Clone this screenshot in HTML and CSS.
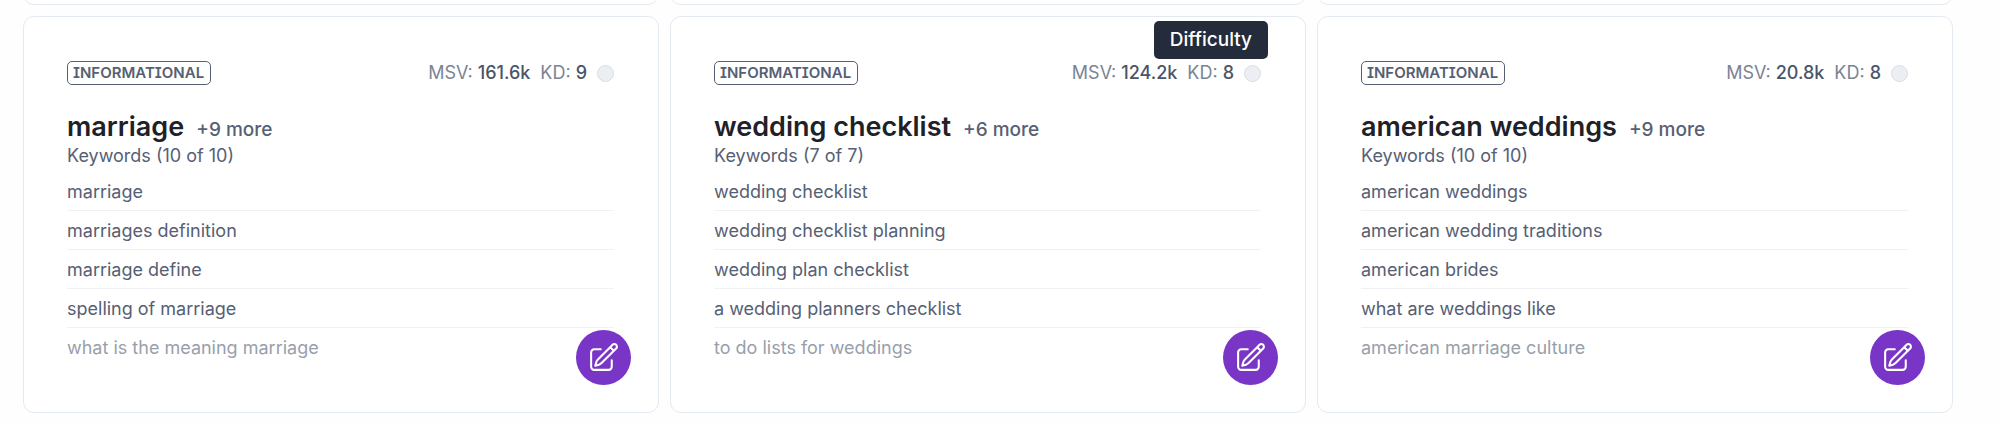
FILE: index.html
```html
<!DOCTYPE html>
<html lang="en">
<head>
<meta charset="utf-8">
<title>Keyword clusters</title>
<meta name="viewport" content="width=device-width, initial-scale=1">
<link rel="stylesheet" href="styles.css">
</head>
<body>
<svg class="defs" aria-hidden="true">
  <symbol id="edit" viewBox="0 0 24 24">
    <path d="m16.862 4.487 1.687-1.688a1.875 1.875 0 1 1 2.652 2.652L10.582 16.07a4.5 4.5 0 0 1-1.897 1.13L6 18l.8-2.685a4.5 4.5 0 0 1 1.13-1.897l8.932-8.931Zm0 0L19.5 7.125M18 14v4.75A2.25 2.25 0 0 1 15.75 21H5.25A2.25 2.25 0 0 1 3 18.75V8.25A2.25 2.25 0 0 1 5.25 6H10"/>
  </symbol>
</svg>
<main class="page">
  <div class="grid grid-previous" aria-hidden="true">
    <div class="card-end"></div>
    <div class="card-end"></div>
    <div class="card-end"></div>
  </div>
  <div class="grid">
    <article class="card">
      <header class="card-head">
        <span class="badge">INFORMATIONAL</span>
        <div class="stats">
          <span class="stat">MSV: <b>161.6k</b></span>
          <span class="stat">KD: <b>9</b></span>
          <span class="dot"></span>
        </div>
      </header>
      <div class="title-row"><h2 class="title">marriage</h2><span class="more">+9 more</span></div>
      <p class="count">Keywords (10 of 10)</p>
      <ul class="keywords">
        <li>marriage</li>
        <li>marriages definition</li>
        <li>marriage define</li>
        <li>spelling of marriage</li>
        <li>what is the meaning marriage</li>
      </ul>
      <button class="edit" type="button" aria-label="Edit marriage"><svg class="edit-icon"><use href="#edit"/></svg></button>
    </article>
    <article class="card">
      <header class="card-head">
        <span class="badge">INFORMATIONAL</span>
        <div class="stats">
          <span class="stat">MSV: <b>124.2k</b></span>
          <span class="stat">KD: <b>8</b></span>
          <span class="dot"></span>
          <span class="tooltip" role="tooltip">Difficulty</span>
        </div>
      </header>
      <div class="title-row"><h2 class="title">wedding checklist</h2><span class="more">+6 more</span></div>
      <p class="count">Keywords (7 of 7)</p>
      <ul class="keywords">
        <li>wedding checklist</li>
        <li>wedding checklist planning</li>
        <li>wedding plan checklist</li>
        <li>a wedding planners checklist</li>
        <li>to do lists for weddings</li>
      </ul>
      <button class="edit" type="button" aria-label="Edit wedding checklist"><svg class="edit-icon"><use href="#edit"/></svg></button>
    </article>
    <article class="card">
      <header class="card-head">
        <span class="badge">INFORMATIONAL</span>
        <div class="stats">
          <span class="stat">MSV: <b>20.8k</b></span>
          <span class="stat">KD: <b>8</b></span>
          <span class="dot"></span>
        </div>
      </header>
      <div class="title-row"><h2 class="title">american weddings</h2><span class="more">+9 more</span></div>
      <p class="count">Keywords (10 of 10)</p>
      <ul class="keywords">
        <li>american weddings</li>
        <li>american wedding traditions</li>
        <li>american brides</li>
        <li>what are weddings like</li>
        <li>american marriage culture</li>
      </ul>
      <button class="edit" type="button" aria-label="Edit american weddings"><svg class="edit-icon"><use href="#edit"/></svg></button>
    </article>
  </div>
</main>
</body>
</html>
```
FILE: styles.css
```css
* {
  box-sizing: border-box;
}

body {
  margin: 0;
  background: #fefefe;
  color: #566074;
  font-family: Inter, "Liberation Sans", sans-serif;
  font-size: 18px;
  line-height: 24px;
}

.defs {
  position: absolute;
  width: 0;
  height: 0;
}

.page {
  overflow: hidden;
  padding: 0 46px 8px 23px;
}

.grid {
  display: grid;
  grid-template-columns: repeat(3, minmax(0, 1fr));
  gap: 11px;
}

.grid-previous {
  margin: -25px 0 11px;
}

.card-end,
.card {
  border: 1px solid #e4eaf1;
  border-radius: 11px;
  background: #fff;
}

.card-end {
  height: 30px;
}

.card {
  position: relative;
  padding: 44px 44px 45px 43px;
}

.card-head {
  display: flex;
  align-items: center;
  justify-content: space-between;
}

.badge {
  padding: 0 6px 0 5px;
  border: 1px solid #566074;
  border-radius: 5px;
  font-size: 15px;
  font-weight: 600;
  font-feature-settings: "cv08";
  line-height: 22px;
}

.stats {
  position: relative;
  display: flex;
  align-items: center;
  gap: 10px;
}

.stat {
  color: #7b8494;
}

.stat b {
  color: #4a5568;
  font-weight: 500;
}

.dot {
  width: 17px;
  height: 17px;
  border: 1px solid #d9dee4;
  border-radius: 50%;
  background: #ebeff3;
}

.tooltip {
  position: absolute;
  right: -7px;
  bottom: 26px;
  padding: 7px 16px;
  border-radius: 5px;
  background: #242b3a;
  color: #fff;
  font-size: 19px;
  font-weight: 500;
}

.title-row {
  display: flex;
  align-items: baseline;
  gap: 12px;
  margin-top: 24px;
}

.title {
  margin: 0;
  color: #1f2129;
  font-size: 27px;
  font-weight: 600;
  line-height: 35px;
}

.more {
  font-size: 19px;
  font-weight: 500;
}

.count {
  margin: 0;
}

.keywords {
  margin: 4px 0 0;
  padding: 0;
  list-style: none;
}

.keywords li {
  height: 39px;
  border-bottom: 1px solid #eff1f4;
  line-height: 40px;
}

.keywords li:last-child {
  border-bottom: 0;
  color: #989fab;
}

.edit {
  position: absolute;
  right: 27px;
  bottom: 27px;
  display: grid;
  place-items: center;
  width: 55px;
  height: 55px;
  padding: 0;
  border: 0;
  border-radius: 50%;
  background: #7935c6;
  color: #fff;
}

.edit-icon {
  width: 33px;
  height: 33px;
  fill: none;
  stroke: currentColor;
  stroke-width: 1.5;
  stroke-linecap: round;
  stroke-linejoin: round;
}
```
